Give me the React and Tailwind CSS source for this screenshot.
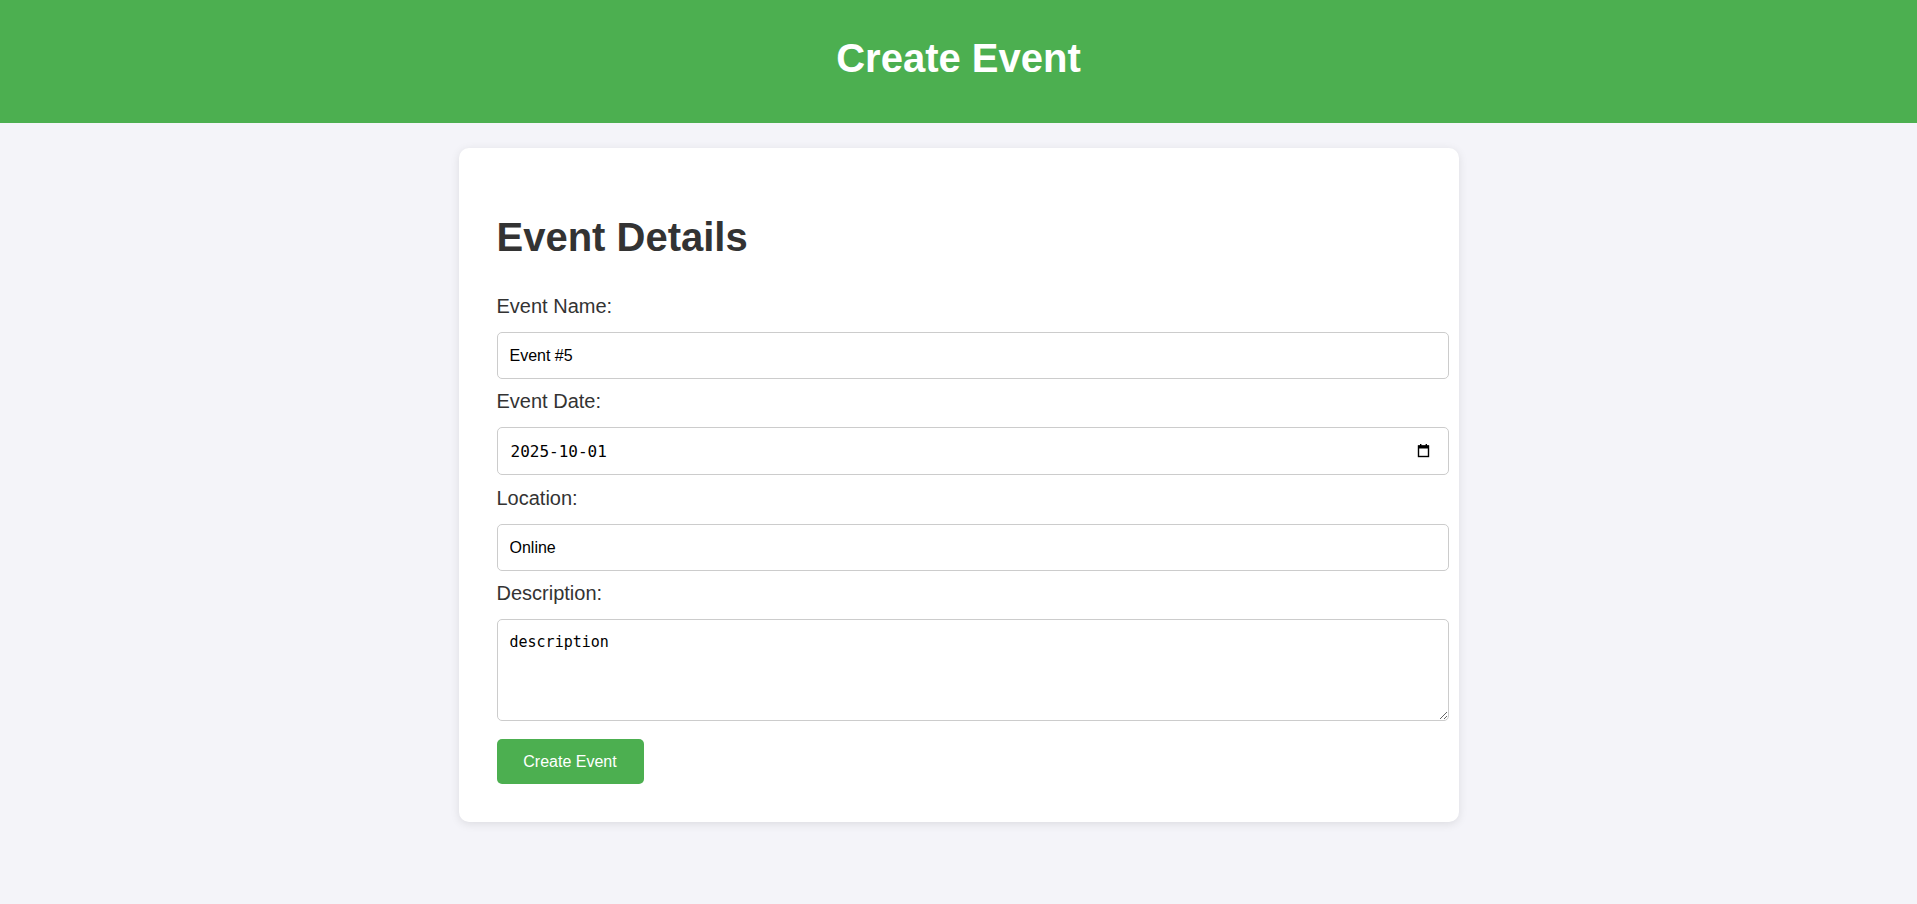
import { useState } from "react";

const CalendarIcon = () => (
  <svg width="13" height="15" viewBox="0 0 13 15" className="absolute right-[19px] top-[16px] pointer-events-none">
    <rect x="1.5" y="3" width="10" height="10.5" fill="none" stroke="#000" strokeWidth="1.4" />
    <rect x="1" y="2.5" width="11" height="3" fill="#000" />
    <rect x="3" y="1" width="1.4" height="2" fill="#000" />
    <rect x="8.6" y="1" width="1.4" height="2" fill="#000" />
  </svg>
);

const CreateEvent = () => {
  const [formData, setFormData] = useState({
    name: "Event #5",
    date: "2025-10-01",
    location: "Online",
    description: "description",
  });

  const handleChange = (e) => {
    const { name, value } = e.target;
    setFormData({ ...formData, [name]: value });
  };

  const handleSubmit = (e) => {
    e.preventDefault();
  };

  return (
    <div className="min-h-screen bg-[#f4f4f9] font-['Liberation_Sans',Arial,sans-serif] pb-[40px]">
      {/* Header */}
      <header className="bg-[#4CAF50] h-[123px] pt-[35px] text-center">
        <h1 className="text-white text-[40px] leading-[46px] font-bold">Create Event</h1>
      </header>

      {/* Card */}
      <div className="w-[1000px] mx-auto mt-[25px] bg-white rounded-[10px] shadow-[0_2px_10px_rgba(0,0,0,0.1)] pt-[66px] pb-[38px] pl-[38px]">
        <h2 className="text-[#333] text-[40px] leading-[46px] font-bold mb-[34px]">Event Details</h2>

        <form onSubmit={handleSubmit} className="flex flex-col items-start">
          <label htmlFor="name" className="block text-[#333] text-[20px] leading-[25px] mb-[13px]">
            Event Name:
          </label>
          <input
            type="text"
            id="name"
            name="name"
            value={formData.name}
            onChange={handleChange}
            className="w-[952px] h-[47px] border border-[#ccc] rounded-[5px] px-[12px] text-[16px] text-black mb-[10px] outline-none"
          />

          <label htmlFor="date" className="block text-[#333] text-[20px] leading-[25px] mb-[13px]">
            Event Date:
          </label>
          {/* date field shown as yyyy-mm-dd, picker glyph drawn on top */}
          <div className="relative w-[952px] h-[48px] mb-[11px]">
            <input
              type="text"
              id="date"
              name="date"
              value={formData.date}
              onChange={handleChange}
              className="w-full h-full border border-[#ccc] rounded-[5px] pl-[13px] pr-[40px] text-[16px] text-black outline-none font-['DejaVu_Sans_Mono',monospace]"
            />
            <CalendarIcon />
          </div>

          <label htmlFor="location" className="block text-[#333] text-[20px] leading-[25px] mb-[13px]">
            Location:
          </label>
          <input
            type="text"
            id="location"
            name="location"
            value={formData.location}
            onChange={handleChange}
            className="w-[952px] h-[47px] border border-[#ccc] rounded-[5px] px-[12px] text-[16px] text-black mb-[10px] outline-none"
          />

          <label htmlFor="description" className="block text-[#333] text-[20px] leading-[25px] mb-[13px]">
            Description:
          </label>
          <textarea
            id="description"
            name="description"
            value={formData.description}
            onChange={handleChange}
            className="block w-[952px] h-[102px] border border-[#ccc] rounded-[5px] px-[12px] pt-[13px] text-[15px] leading-[18px] text-black mb-[18px] outline-none font-['DejaVu_Sans_Mono',monospace]"
          />

          <button
            type="submit"
            className="bg-[#4CAF50] text-white text-[16px] leading-[19px] h-[45px] w-[147px] rounded-[5px] cursor-pointer"
          >
            Create Event
          </button>
        </form>
      </div>
    </div>
  );
};

export default CreateEvent;
